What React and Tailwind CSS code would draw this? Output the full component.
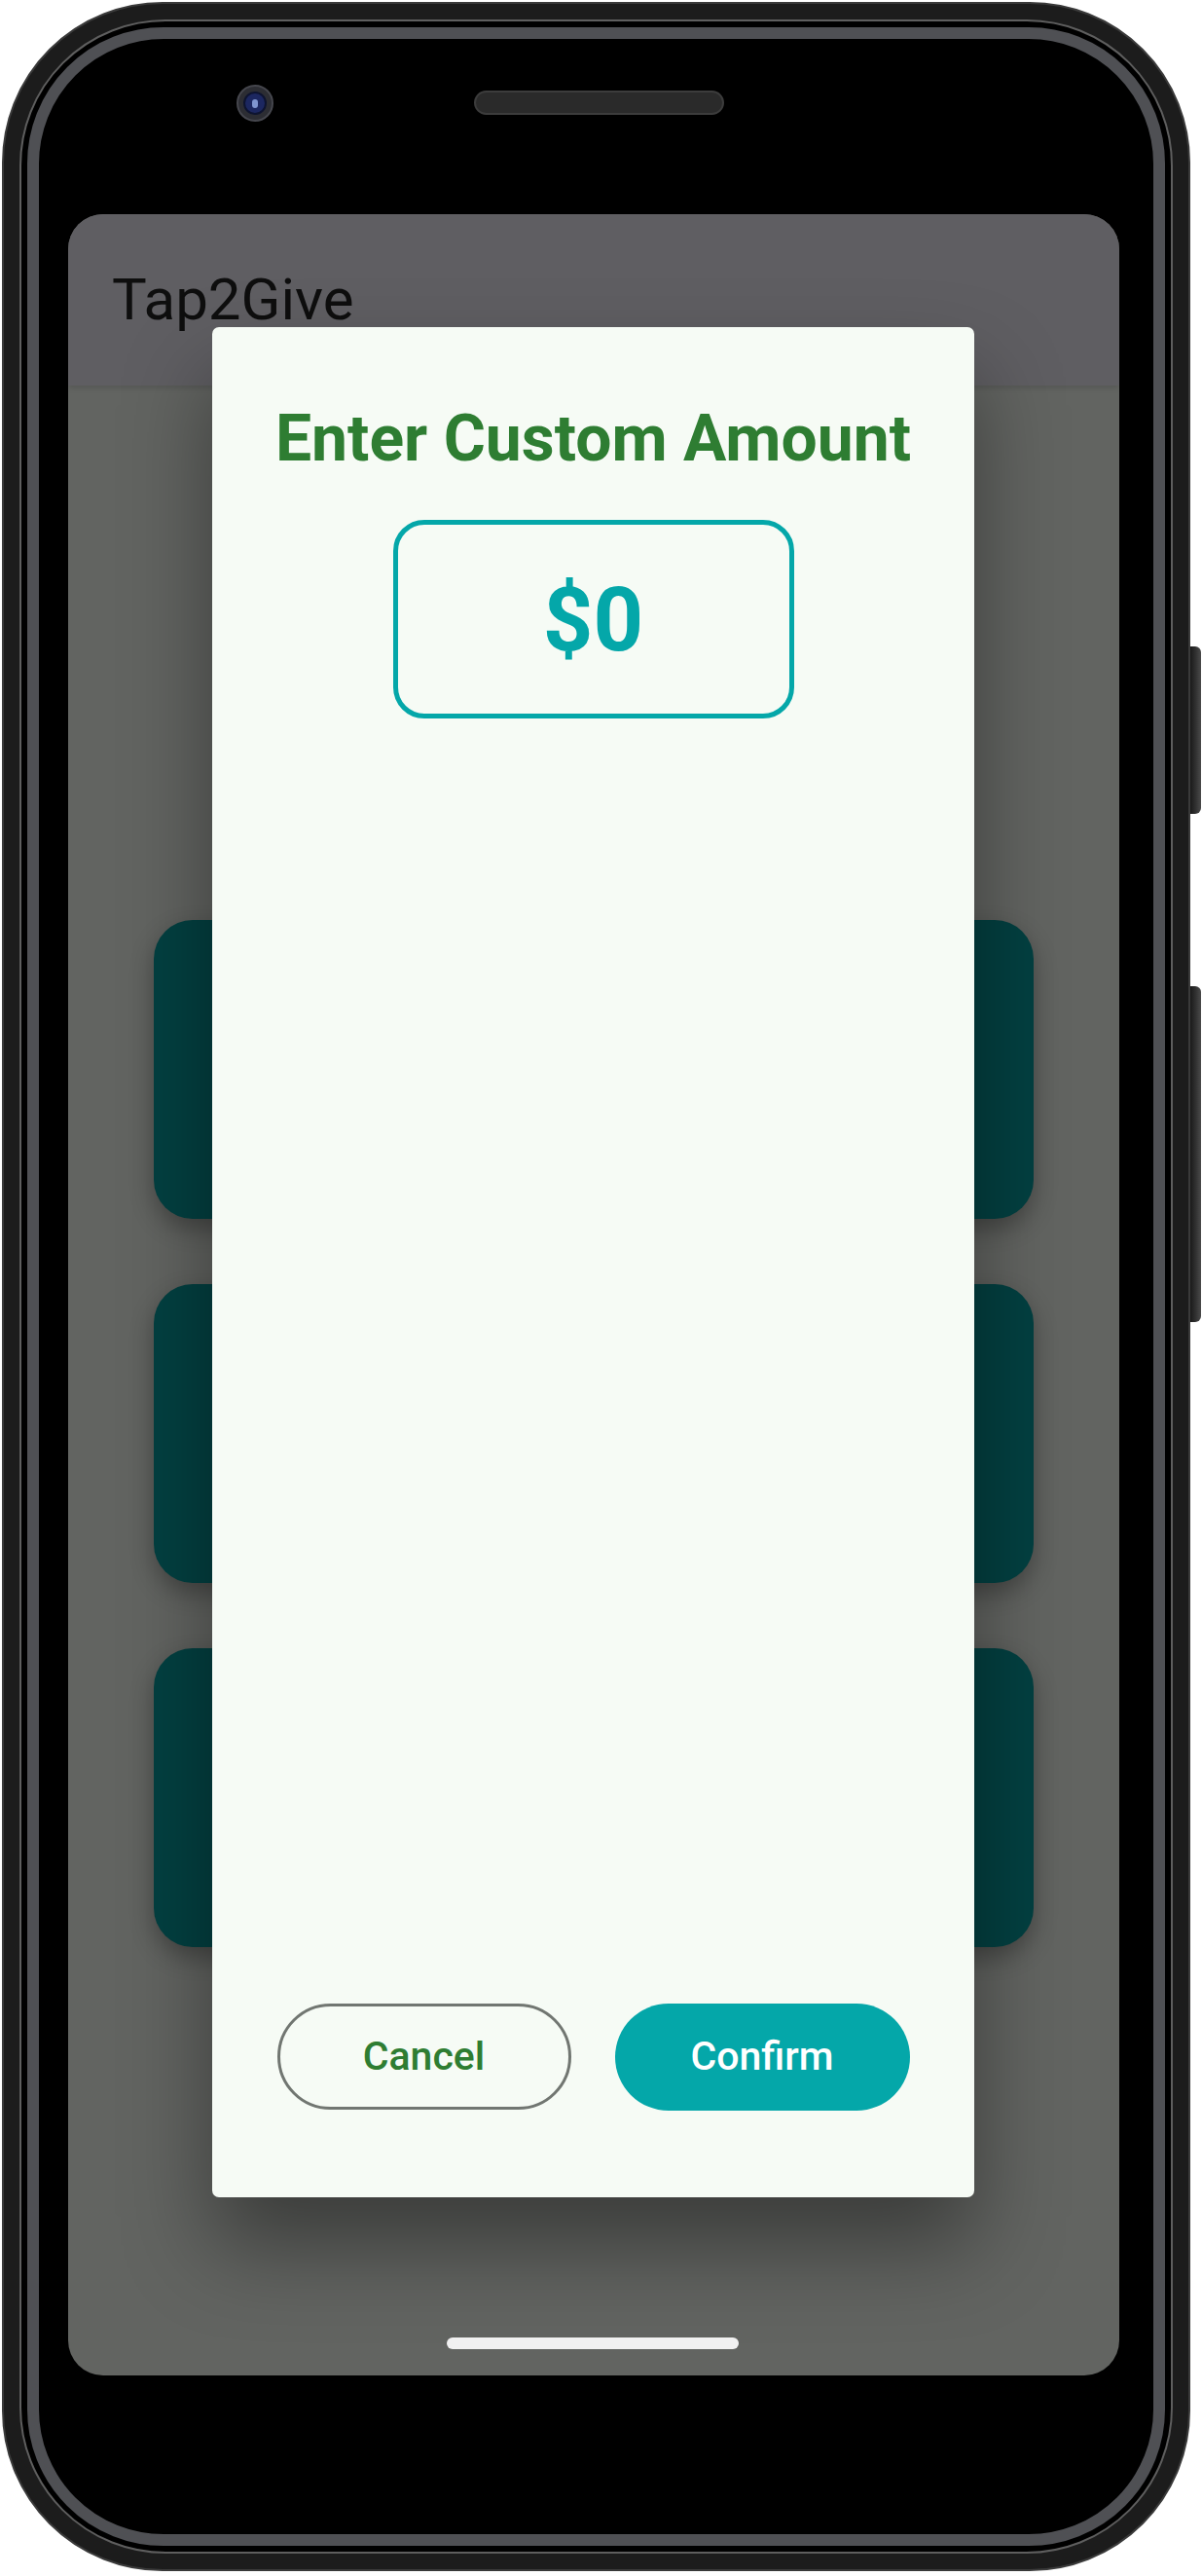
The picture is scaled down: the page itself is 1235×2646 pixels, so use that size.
import React from "react";

const cards = [0, 1, 2];

const CustomAmountDialog = () => {
    return (
        <div className="absolute left-[148px] top-[116px] w-[783px] h-[1921px] rounded-[7px] bg-[#f6fbf5] shadow-[0_50px_90px_rgba(0,0,0,0.4)] flex flex-col items-center pt-[75px] pb-[89px]">
            {/* title */}
            <h2 className="text-[66px] leading-[80px] font-bold text-[#2e7d32]">
                Enter Custom Amount
            </h2>

            {/* amount box */}
            <div className="mt-[43px] w-[412px] h-[204px] rounded-[32px] border-[5px] border-[#04a7a9] flex items-center justify-center">
                <span className="text-[90px] leading-none font-bold text-[#04a7a9] mt-[4px]">$0</span>
            </div>

            <div className="flex-1" />

            {/* actions */}
            <div className="flex gap-[45px]">
                <button className="w-[302px] h-[109px] rounded-full border-[3px] border-[#717671] text-[41px] font-medium text-[#2e7d32] flex items-center justify-center">
                    Cancel
                </button>
                <button className="w-[303px] h-[110px] rounded-full bg-[#04a7a9] text-[41px] font-medium text-white flex items-center justify-center">
                    Confirm
                </button>
            </div>
        </div>
    );
};

const Screen = () => {
    return (
        <div className="relative w-[1080px] h-[2220px] rounded-[36px] overflow-hidden bg-[#626461]">
            {/* app bar */}
            <div className="h-[176px] bg-[#5f5e62] flex items-center pl-[45px] shadow-[0_2px_6px_rgba(0,0,0,0.15)]">
                <span className="text-[60px] text-[#0e0e0e]">Tap2Give</span>
            </div>

            {/* cards behind the dialog */}
            <div className="pt-[549px] px-[88px] flex flex-col gap-[67px]">
                {cards.map((c) => (
                    <div key={c} className="h-[307px] rounded-[40px] bg-[#034041] shadow-[0_10px_24px_rgba(0,0,0,0.3)]" />
                ))}
            </div>

            <CustomAmountDialog />

            {/* gesture bar */}
            <div className="absolute top-[2181px] left-[389px] w-[300px] h-[12px] rounded-full bg-[#f1f1f1]" />
        </div>
    );
};

export default function App() {
    return (
        <div className="w-[1235px] h-[2646px] bg-white flex pl-[2px] pt-[2px] font-['Roboto','Liberation_Sans',sans-serif]">
            {/* phone body */}
            <div className="w-[1221px] h-[2639px] rounded-[165px] bg-[#1c1c1c] border-[2px] border-[#3a3a3a] p-[16px]">
                <div className="h-full rounded-[150px] bg-black border-[2px] border-[#5e5e5e] p-[6px]">
                    <div className="h-full rounded-[140px] bg-black border-[12px] border-[#4f5054] flex flex-col">
                        {/* top bezel */}
                        <div className="h-[180px] flex items-start pt-[47px] pl-[203px]">
                            <div className="w-[38px] h-[38px] rounded-full bg-[#2c2d33] border-[2px] border-[#45464d] flex items-center justify-center">
                                <div className="w-[24px] h-[24px] rounded-full bg-[#1c2760] border-[2px] border-[#0e1430] flex items-center justify-center">
                                    <div className="w-[6px] h-[9px] rounded-full bg-[#7f95d0]" />
                                </div>
                            </div>
                            <div className="ml-[206px] mt-[6px] w-[257px] h-[25px] rounded-full bg-[#2a2a2a] border-[2px] border-[#3c3c3c]" />
                        </div>
                        <div className="pl-[30px]">
                            <Screen />
                        </div>
                    </div>
                </div>
            </div>

            {/* side buttons */}
            <div className="w-[11px] flex flex-col">
                <div className="mt-[662px] h-[172px] rounded-r-[6px] bg-gradient-to-r from-[#1a1a1a] to-[#4a4a4a]" />
                <div className="mt-[177px] h-[345px] rounded-r-[6px] bg-gradient-to-r from-[#1a1a1a] to-[#4a4a4a]" />
            </div>
        </div>
    );
}
